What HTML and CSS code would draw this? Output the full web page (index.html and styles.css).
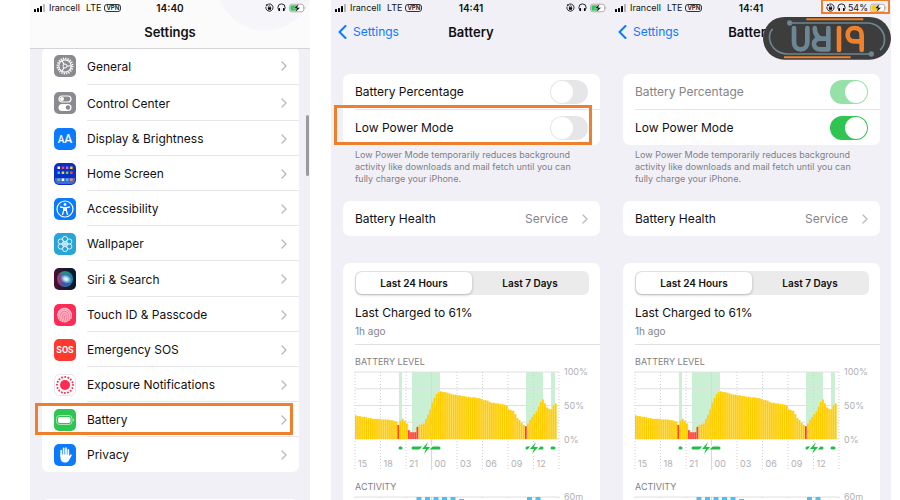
FILE: index.html
```
<!DOCTYPE html>
<html lang="en">
<head>
    <meta charset="utf-8">
    <meta name="viewport" content="width=device-width, initial-scale=1.0">
    <title>Battery Settings</title>
    <link rel="stylesheet" href="styles.css">
</head>
<body>
    <!-- shared icons -->
    <svg class="sprite" aria-hidden="true">
        <symbol id="signal" viewBox="0 0 12 8">
            <rect x="0" y="5" width="2" height="3" rx=".5" />
            <rect x="3" y="4" width="2" height="4" rx=".5" />
            <rect x="6" y="2" width="2" height="6" rx=".5" />
            <rect x="9" y="0" width="2" height="8" rx=".5" opacity=".25" />
        </symbol>
        <symbol id="lock" viewBox="0 0 10 10">
            <path d="M2.3 2.1A4 4 0 1 1 1.1 4" fill="none" stroke="#111" stroke-width="1" />
            <path d="M.9 1.2l.4 2.2 2-.7z" />
            <rect x="3.2" y="4.6" width="3.6" height="2.8" rx=".5" />
            <path d="M4 4.8V4a1 1 0 0 1 2 0v.8" fill="none" stroke="#111" stroke-width=".7" />
        </symbol>
        <symbol id="headphones" viewBox="0 0 10 10">
            <path d="M2.6 8C1.4 7 1 6 1 5a4 4 0 0 1 8 0c0 1-.4 2-1.6 3" fill="none" stroke="#111" stroke-width="1" />
            <rect x="1.6" y="5.6" width="1.8" height="3.4" rx=".8" />
            <rect x="6.6" y="5.6" width="1.8" height="3.4" rx=".8" />
        </symbol>
        <symbol id="battery" viewBox="0 0 18 10">
            <rect x=".5" y="1" width="15" height="8" rx="2.5" fill="#fff" stroke="#aaa" />
            <rect x="1.5" y="2" width="7" height="6" rx="1.5" fill="currentColor" />
            <path d="M16.5 3.5v3c1-.4 1-2.6 0-3z" fill="#aaa" />
            <path d="M10.5 0L5 5.6h3L6.5 10 12 4.4H9z" fill="#111" stroke="#fff" stroke-width=".5" />
        </symbol>
        <symbol id="chevron" viewBox="0 0 6 10">
            <path d="M1 1l4 4-4 4" fill="none" stroke="#b9b9bd" stroke-width="1.3" stroke-linecap="round" stroke-linejoin="round" />
        </symbol>
        <symbol id="back" viewBox="0 0 9 14">
            <path d="M7.5 1L1.5 7l6 6" fill="none" stroke="#0a7aff" stroke-width="2" stroke-linecap="round" stroke-linejoin="round" />
        </symbol>
    </svg>

    <main class="screens">
        <!-- Settings list -->
        <section class="screen">
            <header class="header header-light">
                <div class="status">
                    <div class="status-left">
                        <svg class="signal"><use href="#signal" /></svg>
                        <span class="carrier">Irancell</span><span>LTE</span><span class="vpn">VPN</span>
                    </div>
                    <span class="time">14:40</span>
                    <div class="status-right">
                        <svg class="status-icon"><use href="#lock" /></svg>
                        <svg class="status-icon"><use href="#headphones" /></svg>
                        <svg class="battery"><use href="#battery" /></svg>
                    </div>
                </div>
                <div class="navbar"><h1>Settings</h1></div>
            </header>
            <ul class="card menu">
                <li>
                    <svg class="app-icon" viewBox="0 0 22 22">
                        <rect width="22" height="22" rx="5" fill="#8a8a90" />
                        <g fill="none" stroke="#fff">
                            <circle cx="11" cy="11" r="7.6" stroke-width="1.8" stroke-dasharray="1.25 1.137" />
                            <circle cx="11" cy="11" r="6.2" stroke-width="1.2" />
                            <circle cx="11" cy="11" r="2" stroke-width="1" />
                            <path d="M13 11h4.5M10 9.3L7.8 5.5M10 12.7l-2.2 3.8" stroke-width="1.2" />
                        </g>
                    </svg>
                    <a href="#">General</a>
                    <svg class="chevron"><use href="#chevron" /></svg>
                </li>
                <li>
                    <svg class="app-icon" viewBox="0 0 22 22">
                        <rect width="22" height="22" rx="5" fill="#8a8a90" />
                        <rect x="5" y="4" width="12" height="6" rx="3" fill="none" stroke="#fff" stroke-width="1.2" />
                        <circle cx="8" cy="7" r="2" fill="#fff" />
                        <rect x="4.5" y="12" width="13" height="7" rx="3.5" fill="#fff" />
                        <circle cx="14" cy="15.5" r="2.2" fill="#8a8a90" />
                    </svg>
                    <a href="#">Control Center</a>
                    <svg class="chevron"><use href="#chevron" /></svg>
                </li>
                <li>
                    <span class="app-icon text-icon blue"><small>A</small>A</span>
                    <a href="#">Display &amp; Brightness</a>
                    <svg class="chevron"><use href="#chevron" /></svg>
                </li>
                <li>
                    <svg class="app-icon" viewBox="0 0 22 22">
                        <rect width="22" height="22" rx="5" fill="#0b2fc4" />
                        <path d="M1 15h20v2a4 4 0 0 1-4 4H5a4 4 0 0 1-4-4z" fill="#4767d8" />
                        <rect x="3.5" y="3.5" width="2.5" height="2.5" fill="#fff" />
                        <rect x="7.7" y="3.5" width="2.5" height="2.5" fill="#ff453a" />
                        <rect x="11.9" y="3.5" width="2.5" height="2.5" fill="#c46bff" />
                        <rect x="16.1" y="3.5" width="2.5" height="2.5" fill="#ffd60a" />
                        <rect x="3.5" y="8.5" width="2.5" height="2.5" fill="#30c8ff" />
                        <rect x="7.7" y="8.5" width="2.5" height="2.5" fill="#ffd60a" />
                        <rect x="11.9" y="8.5" width="2.5" height="2.5" fill="#4cd964" />
                        <rect x="16.1" y="8.5" width="2.5" height="2.5" fill="#ff453a" />
                        <rect x="3.5" y="15.5" width="2.5" height="2.5" fill="#4cd964" />
                        <rect x="7.7" y="15.5" width="2.5" height="2.5" fill="#fff" />
                        <rect x="11.9" y="15.5" width="2.5" height="2.5" fill="#30c8ff" />
                        <rect x="16.1" y="15.5" width="2.5" height="2.5" fill="#ff8a50" />
                    </svg>
                    <a href="#">Home Screen</a>
                    <svg class="chevron"><use href="#chevron" /></svg>
                </li>
                <li>
                    <svg class="app-icon" viewBox="0 0 22 22">
                        <rect width="22" height="22" rx="5" fill="#0a7aff" />
                        <circle cx="11" cy="11" r="8" fill="none" stroke="#fff" stroke-width="1.2" />
                        <circle cx="11" cy="6.5" r="1.4" fill="#fff" />
                        <path d="M6.5 9l3.2.7v2.8L8.5 16.5M15.500 9l-3.200.7v2.8l1.2 4M9.7 9.7h2.6M9.800 12.3h2.4" fill="none" stroke="#fff" stroke-width="1.3" stroke-linecap="round" />
                        <path d="M9.5 9.5h3v3h-3z" fill="#fff" />
                    </svg>
                    <a href="#">Accessibility</a>
                    <svg class="chevron"><use href="#chevron" /></svg>
                </li>
                <li>
                    <svg class="app-icon" viewBox="0 0 22 22">
                        <rect width="22" height="22" rx="5" fill="#28a5d8" />
                        <g fill="#28a5d8" fill-opacity=".3" stroke="#d8f2fd" stroke-width="1">
                            <circle cx="11" cy="6" r="2.6" />
                            <circle cx="15.3" cy="8.5" r="2.6" />
                            <circle cx="15.3" cy="13.5" r="2.6" />
                            <circle cx="11" cy="16" r="2.6" />
                            <circle cx="6.7" cy="13.5" r="2.6" />
                            <circle cx="6.7" cy="8.5" r="2.6" />
                            <circle cx="11" cy="11" r="2.4" />
                        </g>
                        <path d="M11 8v6M8.4 9.5l5.2 3M8.4 12.5l5.2-3" stroke="#d8f2fd" />
                    </svg>
                    <a href="#">Wallpaper</a>
                    <svg class="chevron"><use href="#chevron" /></svg>
                </li>
                <li>
                    <svg class="app-icon" viewBox="0 0 22 22">
                        <defs>
                            <linearGradient id="siriBg" x1="0" x2="1">
                                <stop offset="0" stop-color="#4b1030" />
                                <stop offset=".5" stop-color="#1b1a30" />
                                <stop offset="1" stop-color="#07192c" />
                            </linearGradient>
                            <linearGradient id="siriOrb" x1="0" y1=".6" x2="1" y2=".4">
                                <stop offset="0" stop-color="#c0286c" />
                                <stop offset=".45" stop-color="#3a6f96" />
                                <stop offset="1" stop-color="#1580b8" />
                            </linearGradient>
                            <radialGradient id="siriGlow">
                                <stop offset="0" stop-color="#fff" />
                                <stop offset=".4" stop-color="#d5f3fb" stop-opacity=".8" />
                                <stop offset="1" stop-color="#8ce0f0" stop-opacity="0" />
                            </radialGradient>
                        </defs>
                        <rect width="22" height="22" rx="5" fill="url(#siriBg)" />
                        <circle cx="11" cy="11" r="8" fill="url(#siriOrb)" />
                        <path d="M5 6c4-4 10-3 12 1-4-1-8-1-12-1z" fill="#1d9a7c" opacity=".7" />
                        <path d="M5 15c3 4 9 4 12 0-4 0-8-2-12 0z" fill="#3450c4" opacity=".7" />
                        <ellipse cx="12" cy="11" rx="6" ry="4.5" fill="url(#siriGlow)" transform="rotate(25 12 11)" />
                    </svg>
                    <a href="#">Siri &amp; Search</a>
                    <svg class="chevron"><use href="#chevron" /></svg>
                </li>
                <li>
                    <svg class="app-icon" viewBox="0 0 22 22">
                        <rect width="22" height="22" rx="5" fill="#ff2a55" />
                        <circle cx="10.5" cy="11" r="7.6" fill="#ff7f98" />
                        <g fill="none" stroke="#ffd3dc" stroke-width=".8" stroke-linecap="round">
                            <path d="M4.5 7.5a7.4 7.4 0 0 1 12 0M3.6 11.5a7 7 0 0 1 13.8-1.5c.3 1.5.2 3-.3 4.5M4.5 14.5c.7-1.5.5-3 .7-4a5.3 5.3 0 0 1 10.4.3c.2 2 0 3.800-.7 5.5M6.3 16.5c1-2 .6-4 .9-5.5a3.4 3.4 0 0 1 6.6.3c0 2.5-.2 4.5-1.2 6.5M8.500 17.8c1-2.300.7-4.300.8-6.300a1.3 1.3 0 0 1 2.5 0c0 2.5-.1 4.5-1 6.7" />
                        </g>
                    </svg>
                    <a href="#">Touch ID &amp; Passcode</a>
                    <svg class="chevron"><use href="#chevron" /></svg>
                </li>
                <li>
                    <span class="app-icon text-icon red">SOS</span>
                    <a href="#">Emergency SOS</a>
                    <svg class="chevron"><use href="#chevron" /></svg>
                </li>
                <li>
                    <svg class="app-icon" viewBox="0 0 22 22">
                        <rect x=".5" y=".5" width="21" height="21" rx="5" fill="#fff" stroke="#e6e6ea" />
                        <circle cx="11" cy="11" r="5" fill="#ff2a50" />
                        <circle cx="11" cy="11" r="8" fill="none" stroke="#ff2a50" stroke-width="2" stroke-linecap="round" stroke-dasharray="0.01 3.132" />
                    </svg>
                    <a href="#">Exposure Notifications</a>
                    <svg class="chevron"><use href="#chevron" /></svg>
                </li>
                <li class="marked">
                    <svg class="app-icon" viewBox="0 0 22 22">
                        <rect width="22" height="22" rx="5" fill="#30c452" />
                        <rect x="2.5" y="6.5" width="15.5" height="9" rx="3" fill="none" stroke="#a8e6b5" />
                        <rect x="4" y="8" width="12.5" height="6" rx="1.8" fill="#fff" />
                        <path d="M19 9.5v3c1.2-.5 1.2-2.5 0-3z" fill="#d4f3da" />
                    </svg>
                    <a href="#">Battery</a>
                    <svg class="chevron"><use href="#chevron" /></svg>
                </li>
                <li>
                    <svg class="app-icon" viewBox="0 0 22 22">
                        <rect width="22" height="22" rx="5" fill="#0a7aff" />
                        <g fill="none" stroke="#fff" stroke-width="1.7" stroke-linecap="round">
                            <path d="M7.2 12V6.5M9.6 11V4.3M12 11V4M14.3 12V5.8M14.8 14.5l2-3.3" />
                        </g>
                        <path d="M6.4 10.5h8.7v2.8l1.6-2.2.8.5-2.5 4.7c-.8 1.5-2 2.3-4 2.3-3 0-4.6-2-4.6-5z" fill="#fff" />
                    </svg>
                    <a href="#">Privacy</a>
                    <svg class="chevron"><use href="#chevron" /></svg>
                </li>
            </ul>
            <div class="card next-card"></div>
            <div class="scrollbar"></div>
        </section>

        <!-- Low Power Mode off -->
        <section class="screen">
            <header class="header">
                <div class="status">
                    <div class="status-left">
                        <svg class="signal"><use href="#signal" /></svg>
                        <span class="carrier">Irancell</span><span>LTE</span><span class="vpn">VPN</span>
                    </div>
                    <span class="time">14:41</span>
                    <div class="status-right">
                        <svg class="status-icon"><use href="#lock" /></svg>
                        <svg class="status-icon"><use href="#headphones" /></svg>
                        <svg class="battery"><use href="#battery" /></svg>
                    </div>
                </div>
                <div class="navbar">
                    <a class="back" href="#"><svg><use href="#back" /></svg>Settings</a>
                    <h1>Battery</h1>
                </div>
            </header>
            <div class="card options">
                <div class="option">
                    <label for="percentOff">Battery Percentage</label>
                    <input type="checkbox" class="switch" id="percentOff">
                </div>
                <div class="option marked">
                    <label for="powerOff">Low Power Mode</label>
                    <input type="checkbox" class="switch" id="powerOff">
                </div>
            </div>
            <p class="note">Low Power Mode temporarily reduces background activity like downloads and mail fetch until you can fully charge your iPhone.</p>
            <div class="card health">
                <a href="#">Battery Health</a>
                <span class="service">Service</span>
                <svg class="chevron"><use href="#chevron" /></svg>
            </div>
            <div class="card usage">
                <div class="segments">
                    <button type="button" class="active">Last 24 Hours</button>
                    <button type="button">Last 7 Days</button>
                </div>
                <p class="charged">Last Charged to 61%</p>
                <p class="ago">1h ago</p>
                <h2>BATTERY LEVEL</h2>
                <svg class="chart level-chart" viewBox="0 0 234 98"></svg>
                <h2>ACTIVITY</h2>
                <svg class="chart activity-chart" viewBox="0 0 234 60"></svg>
            </div>
        </section>

        <!-- Low Power Mode on -->
        <section class="screen joined">
            <header class="header">
                <div class="status">
                    <div class="status-left">
                        <svg class="signal"><use href="#signal" /></svg>
                        <span class="carrier">Irancell</span><span>LTE</span><span class="vpn">VPN</span>
                    </div>
                    <span class="time">14:41</span>
                    <div class="status-right low-power marked">
                        <svg class="status-icon"><use href="#lock" /></svg>
                        <svg class="status-icon"><use href="#headphones" /></svg>
                        <span>54%</span>
                        <svg class="battery"><use href="#battery" /></svg>
                    </div>
                </div>
                <div class="navbar">
                    <a class="back" href="#"><svg><use href="#back" /></svg>Settings</a>
                    <h1>Battery</h1>
                </div>
                <svg class="logo" viewBox="0 0 384 128">
                    <rect width="384" height="128" rx="64" fill="#3d3d3d" />
                    <g fill="none" stroke="#6c8694" stroke-width="5" stroke-linecap="round">
                        <path d="M80 18h232c28 0 48 18 52 42 3 16-3 29-11 38" />
                        <path d="M324 111H74c-30 0-50-20-54-44-2-13 2-24 8-30" />
                    </g>
                    <circle cx="80" cy="18" r="8" fill="#6c8694" />
                    <circle cx="325" cy="111" r="8" fill="#6c8694" />
                    <path d="M130 7h171M63 121h200" stroke="#f0802a" stroke-width="6" />
                    <g fill="none" stroke="#6c8694" stroke-width="14" stroke-linecap="round" stroke-linejoin="round">
                        <path d="M93 33v42c0 14 8 22 20 22s20-8 20-22V33" />
                        <path d="M196 33v64h-24c-12 0-19-6-19-16s7-16 19-16h22M174 65c-12-4-18-14-19-32" />
                    </g>
                    <g fill="none" stroke="#f0802a" stroke-width="14" stroke-linecap="round" stroke-linejoin="round">
                        <path d="M228 33v66" />
                        <path d="M296 99V54c0-14-9-21-21-21s-21 8-21 20 8 20 20 20h20" />
                    </g>
                </svg>
            </header>
            <div class="card options">
                <div class="option disabled">
                    <label for="percentOn">Battery Percentage</label>
                    <input type="checkbox" class="switch" id="percentOn" checked disabled>
                </div>
                <div class="option">
                    <label for="powerOn">Low Power Mode</label>
                    <input type="checkbox" class="switch" id="powerOn" checked>
                </div>
            </div>
            <p class="note">Low Power Mode temporarily reduces background activity like downloads and mail fetch until you can fully charge your iPhone.</p>
            <div class="card health">
                <a href="#">Battery Health</a>
                <span class="service">Service</span>
                <svg class="chevron"><use href="#chevron" /></svg>
            </div>
            <div class="card usage">
                <div class="segments">
                    <button type="button" class="active">Last 24 Hours</button>
                    <button type="button">Last 7 Days</button>
                </div>
                <p class="charged">Last Charged to 61%</p>
                <p class="ago">1h ago</p>
                <h2>BATTERY LEVEL</h2>
                <svg class="chart level-chart" viewBox="0 0 234 98"></svg>
                <h2>ACTIVITY</h2>
                <svg class="chart activity-chart" viewBox="0 0 234 60"></svg>
            </div>
        </section>
    </main>

    <script>
        // battery level in percent, one value per 15 minutes
        const levels = [
            35, 34, 34, 33, 33, 32, 31, 31, 30, 30, 30, 30, 29, 29, 29, 29,
            28, 28, 27, 26, 21, 27, 30, 27, 23, 13, 10, 10, 10, 18, 21, 22,
            23, 30, 36, 44, 54, 61, 67, 70, 71, 70, 70, 69, 68, 67, 66, 66,
            65, 65, 64, 64, 63, 63, 62, 62, 62, 61, 61, 60, 58, 58, 57, 55,
            54, 54, 53, 53, 52, 52, 51, 50, 44, 43, 42, 37, 31, 28, 24, 21,
            19, 23, 29, 33, 37, 41, 48, 55, 59, 53, 47, 45, 44, 50, 53
        ];
        const low = [20, 25, 26, 27, 28, 29, 80];
        const charging = [[44, 3], [57, 28], [171, 17], [196, 4]];
        const hours = ['15', '18', '21', '00', '03', '06', '09', '12'];
        const activity = [0, 0, 0, 0, 0, 0, 0, 60, 60, 60, 60, 60, 58, 0, 0, 0, 0, 0, 0, 0, 60, 60, 0, 0];
        const width = 204;
        const height = 67;

        function verticalLines(bottom) {
            let out = '';
            for (let i = 0; i <= 8; i++) {
                const x = i * width / 8;
                out += `<line class="${i === 3 ? 'midnight' : 'hour'}" x1="${x}" x2="${x}" y1="0" y2="${bottom}" />`;
            }
            return out;
        }

        function drawLevels(svg) {
            let out = charging.map(c => `<rect class="charging" x="${c[0]}" y="0" width="${c[1]}" height="${height}" />`).join('');
            for (let i = 0; i <= 4; i++) {
                const y = i * height / 4;
                out += `<line class="grid-line" x1="0" x2="${width}" y1="${y}" y2="${y}" />`;
            }
            out += verticalLines(98);
            const step = width / 96;
            levels.forEach((level, i) => {
                const h = level * height / 100;
                const cls = low.includes(i) ? 'bar low' : 'bar';
                out += `<rect class="${cls}-back" x="${i * step}" y="${height - h}" width="${step}" height="${h}" />`;
                out += `<rect class="${cls}" x="${i * step}" y="${height - h}" width="1.4" height="${h}" />`;
            });
            charging.forEach(c => {
                out += `<line class="plug" x1="${c[0] + 1}" x2="${c[0] + c[1] - 1}" y1="76" y2="76" />`;
            });
            [71, 179].forEach(x => {
                out += `<path class="bolt" d="M${x + 2} 70l-6 7h4l-2 5 6-7h-4z" />`;
            });
            hours.forEach((hour, i) => {
                out += `<text x="${i * width / 8 + 3}" y="95">${hour}</text>`;
            });
            out += '<text x="209" y="3">100%</text><text x="209" y="37">50%</text><text x="209" y="71">0%</text>';
            svg.innerHTML = out;
        }

        function drawActivity(svg) {
            let out = `<line class="grid-line" x1="0" x2="${width}" y1="0" y2="0" />` + verticalLines(60);
            activity.forEach((minutes, i) => {
                if (minutes) {
                    out += `<rect class="active-bar" x="${i * width / 24 + 2}" y="${60 - minutes}" width="5" height="${minutes}" />`;
                }
            });
            out += '<text x="209" y="3">60m</text>';
            svg.innerHTML = out;
        }

        document.querySelectorAll('.level-chart').forEach(drawLevels);
        document.querySelectorAll('.activity-chart').forEach(drawActivity);
    </script>
</body>
</html>
```
FILE: styles.css
```
* {
    box-sizing: border-box;
}

body {
    margin: 0;
    background-color: white;
    font-family: Inter, "Liberation Sans", sans-serif;
    font-size: 12px;
    color: #111;
    overflow: hidden;
}

h1, h2, p, ul {
    margin: 0;
    padding: 0;
}

a {
    color: inherit;
    text-decoration: none;
}

.sprite {
    display: none;
}

.screens {
    display: flex;
    height: 100vh;
    padding: 0 9px 0 30px;
}

.screen {
    flex: 1;
    min-width: 0;
    margin-left: 21px;
    background-color: #f1f0f6;
    position: relative;
    overflow: hidden;
}

.screen:first-child, .screen.joined {
    margin-left: 0;
}

/* status bar and title */
.header {
    position: relative;
}

.header-light {
    z-index: 1;
    background: radial-gradient(circle at 235px -18px, #f5f5fa 48px, #fbfbfc 49px);
    border-bottom: 1px solid #d4d4d8;
}

.status {
    display: grid;
    grid-template-columns: 1fr auto 1fr;
    align-items: center;
    height: 15px;
    padding: 0 4px;
    font-size: 9px;
}

.status-left, .status-right {
    display: flex;
    align-items: center;
    gap: 3px;
}

.status-right {
    justify-content: flex-end;
    color: #32c759;
}

.low-power {
    justify-self: end;
    height: 15px;
    gap: 2px;
    color: #fc0;
}

.low-power span {
    color: #111;
}

.signal {
    width: 12px;
    height: 8px;
}

.carrier {
    margin-right: 3px;
}

.vpn {
    border: 1px solid #333;
    border-radius: 3px;
    padding: 0 1px;
    font-size: 6px;
    font-weight: 600;
    line-height: 6px;
}

.time {
    font-size: 10px;
    font-weight: 600;
}

.status-icon {
    width: 9px;
    height: 9px;
}

.battery {
    width: 17px;
    height: 10px;
}

.navbar {
    display: flex;
    align-items: center;
    justify-content: center;
    height: 33px;
    position: relative;
}

.navbar h1 {
    font-size: 13px;
    font-weight: 600;
}

.back {
    position: absolute;
    left: 7px;
    display: flex;
    align-items: center;
    gap: 6px;
    color: #0a7aff;
}

.back svg {
    width: 9px;
    height: 14px;
}

.logo {
    position: absolute;
    top: 17px;
    right: 0;
    width: 128px;
}

/* cards */
.card {
    margin: 0 11px 0 12px;
    background-color: white;
    border-radius: 7px;
}

.chevron {
    width: 6px;
    height: 10px;
}

.marked {
    position: relative;
}

.marked::after {
    content: "";
    position: absolute;
    border: 3px solid #ee7f2d;
    pointer-events: none;
}

.low-power.marked::after {
    inset: -1px -3px 1px -5px;
    border-width: 2px;
}

/* settings list */
.menu {
    list-style: none;
    margin-top: -2px;
}

.menu li {
    display: flex;
    align-items: center;
    height: 35px;
    padding-left: 12px;
}

.menu li:first-child {
    height: 38px;
}

.menu li:nth-child(2), .menu li:nth-child(7) {
    height: 36px;
}

.menu a {
    flex: 1;
    align-self: stretch;
    display: flex;
    align-items: center;
    margin-left: 11px;
}

.menu li:not(:last-child) {
    background: linear-gradient(#e6e6e9, #e6e6e9) 45px 100% / 100% 1px no-repeat;
}

.menu .chevron {
    margin-right: 12px;
}

.menu .marked::after {
    inset: 1px 6px 2px -7px;
}

.app-icon {
    width: 22px;
    height: 22px;
}

.text-icon {
    display: flex;
    align-items: baseline;
    justify-content: center;
    border-radius: 5px;
    color: white;
    font-family: Roboto, "Liberation Sans", sans-serif;
    font-size: 12px;
    font-weight: 500;
    line-height: 22px;
}

.text-icon small {
    font-size: 10px;
}

.blue {
    background-color: #0a7aff;
}

.red {
    background-color: #ff3830;
    font-size: 9px;
    font-weight: 700;
}

.next-card {
    height: 35px;
    margin-top: 27px;
}

.scrollbar {
    position: absolute;
    top: 115px;
    right: 1px;
    width: 3px;
    height: 61px;
    border-radius: 2px;
    background-color: #9b9b9f;
}

/* battery page */
.options {
    margin-top: 26px;
    padding-left: 12px;
}

.option {
    display: flex;
    align-items: center;
    justify-content: space-between;
    height: 35px;
    padding-right: 12px;
}

.option:first-child {
    height: 36px;
    border-bottom: 1px solid #e6e6e9;
}

.option.marked::after {
    inset: -5px 8px 0 -21px;
}

.disabled label {
    color: #858588;
}

.switch {
    appearance: none;
    width: 38px;
    height: 24px;
    margin: 0;
    padding: 1px;
    border-radius: 12px;
    background-color: #e6e6e8;
}

.switch::before {
    content: "";
    display: block;
    width: 22px;
    height: 22px;
    border-radius: 50%;
    background-color: white;
}

.switch:checked {
    background-color: #30c452;
}

.switch:checked::before {
    margin-left: auto;
}

.switch:disabled {
    opacity: 0.5;
}

.note {
    margin: 4px 24px 0;
    font-size: 9px;
    line-height: 12px;
    color: #808085;
}

.health {
    display: flex;
    align-items: center;
    height: 35px;
    margin-top: 16px;
    padding: 0 12px;
}

.health a {
    flex: 1;
}

.service {
    margin-right: 14px;
    color: #858588;
}

.usage {
    margin-top: 27px;
    padding: 8px 11px 12px 12px;
}

.segments {
    display: flex;
    height: 24px;
    padding: 1px;
    border-radius: 6px;
    background-color: #ebebec;
}

.segments button {
    flex: 1;
    padding: 0;
    border: none;
    border-radius: 6px;
    background: none;
    font-family: inherit;
    font-size: 10px;
    font-weight: 600;
    color: #111;
}

.segments .active {
    background-color: white;
    box-shadow: 0 1px 3px rgba(0, 0, 0, 0.25);
}

.charged {
    margin-top: 10px;
    line-height: 16px;
}

.ago {
    margin: 2px -11px 0 0;
    padding-bottom: 5px;
    border-bottom: 1px solid #e0e0e3;
    font-size: 10px;
    line-height: 16px;
    color: #858588;
}

.usage h2 {
    margin: 10px 0 3px;
    font-size: 9px;
    font-weight: 400;
    line-height: 14px;
    color: #808085;
}

/* charts */
.chart {
    display: block;
    width: 100%;
    overflow: visible;
}

.chart text {
    font-size: 9px;
    fill: #b0b0b4;
}

.grid-line {
    stroke: #e0e0e3;
}

.hour {
    stroke: #d0d0d4;
    stroke-dasharray: 1 2;
}

.midnight {
    stroke: #d8d8dc;
}

.charging {
    fill: #c9f0d3;
}

.bar {
    fill: #fc0;
}

.bar-back {
    fill: #ffdd59;
}

.bar.low {
    fill: #ff3b30;
}

.low-back {
    fill: #ff8a80;
}

.plug {
    stroke: #1fbe45;
    stroke-width: 3;
    stroke-linecap: round;
}

.bolt {
    fill: #1fbe45;
    stroke: white;
    stroke-width: 3;
    paint-order: stroke;
}

.active-bar {
    fill: #4cc0f5;
}
```
